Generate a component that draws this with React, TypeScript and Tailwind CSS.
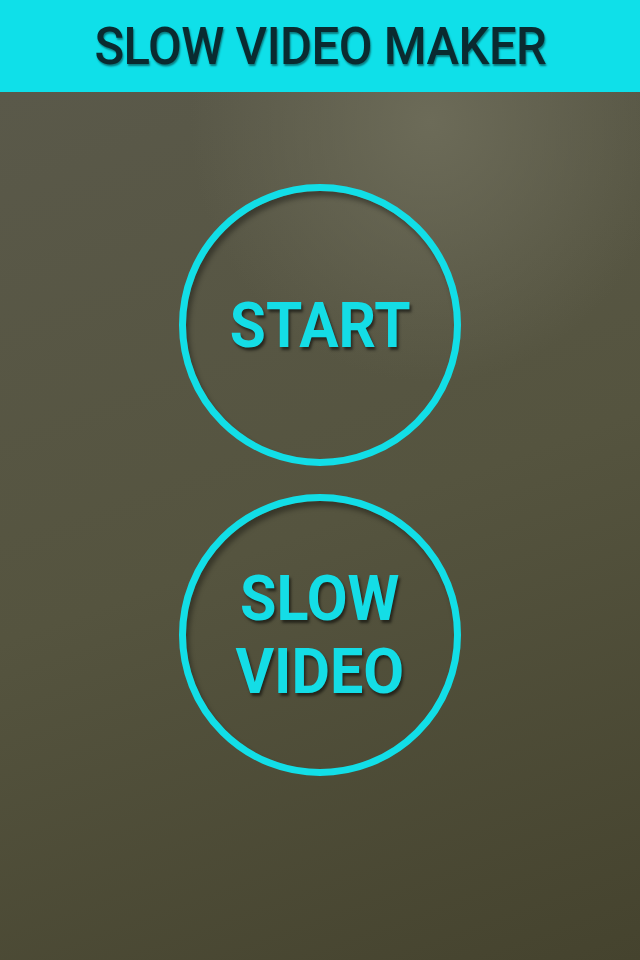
import type { ReactNode } from 'react';

function RoundButton({ children }: { children: ReactNode }) {
  return (
    <button
      type="button"
      className="flex h-[282px] w-[282px] flex-col items-center justify-center rounded-full border-[7px] border-[#12dee7] shadow-[inset_3px_5px_5px_rgba(0,0,0,0.35)] [text-shadow:2px_3px_3px_rgba(0,0,0,0.55)]"
    >
      {children}
    </button>
  );
}

export default function App() {
  return (
    <div className="flex h-[960px] w-[640px] flex-col font-['Roboto',sans-serif]">
      <header className="flex h-[92px] items-center justify-center bg-[#0fe0e9]">
        <h1 className="origin-center scale-x-[0.96] text-[51px] font-medium leading-none tracking-[-0.5px] text-[#0a2b30] [text-shadow:1px_2px_2px_rgba(0,0,0,0.45)]">
          SLOW VIDEO MAKER
        </h1>
      </header>
      <main className="flex flex-1 flex-col items-center gap-[28px] bg-[radial-gradient(ellipse_240px_260px_at_430px_30px,#6c6b58,transparent),linear-gradient(160deg,#5a594a_0%,#55543f_50%,#45432e_100%)] pt-[92px]">
        <RoundButton>
          <span className="scale-x-[0.93] text-[63px] font-bold leading-none text-[#14dde6]">START</span>
        </RoundButton>
        <RoundButton>
          <span className="scale-x-[0.94] text-[63px] font-bold leading-[73px] text-[#14dde6]">
            SLOW
            <br />
            VIDEO
          </span>
        </RoundButton>
      </main>
    </div>
  );
}
